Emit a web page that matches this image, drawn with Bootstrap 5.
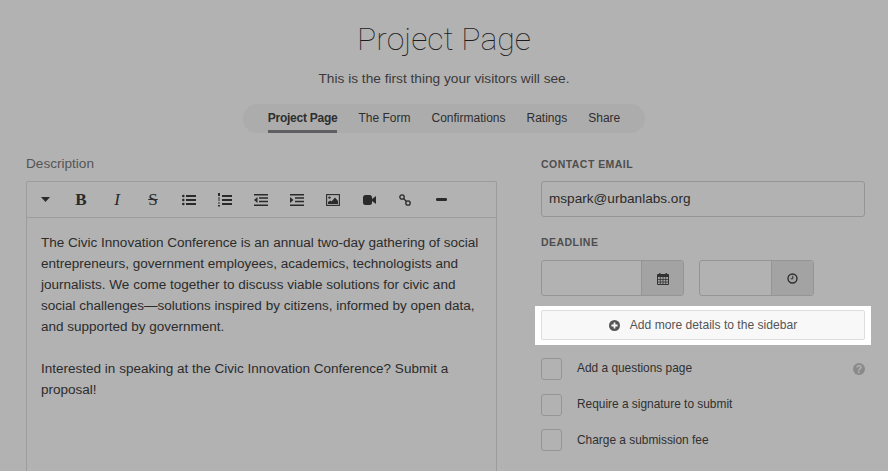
<!DOCTYPE html>
<html lang="en"><head><meta charset="utf-8">
<link href="https://cdn.jsdelivr.net/npm/bootstrap@5.3.0/dist/css/bootstrap.min.css" rel="stylesheet">
<script src="https://cdn.jsdelivr.net/npm/bootstrap@5.3.0/dist/js/bootstrap.bundle.min.js"></script>
<style>
html,body{height:471px;overflow:hidden}
body{background:#b2b2b2;font-family:"Liberation Sans",Arial,sans-serif;color:#2e2e2e;font-size:14px}
.hero-title{font-family:Roboto,"Liberation Sans",sans-serif;font-weight:100;font-size:32px;line-height:40px;color:#1c1c1c;padding-top:19px;margin:0}
.hero-sub{font-size:13.7px;line-height:20px;color:#3a3a3a;margin:10px 0 0}
.tabbar{margin-top:15px;height:29px;border-radius:15px;background:#acacac;padding:0 25px;gap:21px;font-size:12px}
.tab-item{line-height:29px;height:29px;color:#2e2e2e}
.tab-on{font-weight:700;letter-spacing:-.25px;border-bottom:3px solid #5f5f63}
.main-row{display:flex;padding:0 23px 0 26px;gap:44px;margin-top:21px}
.col-left{width:471px;flex:none}
.col-right{width:324px;flex:none;padding-top:3px}
.desc-label{font-size:13.6px;line-height:20px;color:#555;margin-bottom:7px}
.editor{border:1px solid #9c9c9c;border-radius:2px;border-bottom:0;height:300px}
.toolbar{height:36px;border-bottom:1px solid #9c9c9c}
.tbtn{width:36px;display:flex;justify-content:center;align-items:center;color:#2a2a2a;font-family:"Liberation Serif",serif;font-size:16px;line-height:16px}
.tb-b{font-size:17px}
.ed-text{padding:14px 14px;font-size:13.53px;line-height:21px;color:#2c2c2c}
.ed-text p{margin:0 0 21px}
.flabel{font-size:10.5px;font-weight:700;letter-spacing:.46px;color:#4e4e4e;line-height:14px;margin:0 0 10px}
.flabel-b{margin-bottom:11px}
.email-box{height:36px;border:1px solid #959595;border-radius:3px;padding:0 7px;line-height:34px;font-size:13.6px;color:#2a2a2a;margin-bottom:18px}
.date-row{display:flex;gap:15px}
.dt{display:flex;height:36px;border:1px solid #959595;border-radius:3px;overflow:hidden}
.dt-a{width:143px}.dt-b{width:115px}
.dt-in{flex:1}
.dt-addon{width:42px;background:#a3a3a3;border-left:1px solid #959595;display:flex;align-items:center;justify-content:center}
.spot{background:#fff;margin:10px -6px 0;padding:4px 6px 5px}
.addmore{height:30px;border:1px solid #dedede;border-radius:2px;background:#f8f8f8;display:flex;align-items:center;justify-content:center;gap:10px;font-size:12.1px;color:#555}
.chk-row{display:flex;align-items:center;height:22px;margin-bottom:13.5px;font-size:11.9px;color:#303030}
.chk{width:21px;height:22px;border:1px solid #959595;border-radius:3px;margin-right:15px;flex:none}
.chk-list{padding-top:13px}
.chk-txt{padding-top:1px}
.help-ic{margin-left:auto}
.tb-svg{fill:#2a2a2a}
</style></head><body>
<div class="text-center d-flex flex-column align-items-center">
<h1 class="hero-title">Project Page</h1>
<p class="hero-sub">This is the first thing your visitors will see.</p>
<div class="tabbar d-flex">
<span class="tab-item tab-on">Project Page</span><span class="tab-item">The Form</span><span class="tab-item">Confirmations</span><span class="tab-item">Ratings</span><span class="tab-item">Share</span>
</div></div>
<div class="main-row">
<div class="col-left">
<div class="desc-label">Description</div>
<div class="editor">
<div class="toolbar d-flex align-items-center">
<span class="tbtn"><svg width="9" height="5" viewBox="0 0 9 5"><path d="M0 0h9L4.5 5z" class="tb-svg"/></svg></span>
<span class="tbtn tb-b"><b>B</b></span>
<span class="tbtn tb-b"><i>I</i></span>
<span class="tbtn tb-b"><s>S</s></span>
<span class="tbtn"><svg width="14" height="12" viewBox="0 0 14 12" class="tb-svg"><circle cx="1.3" cy="2" r="1.3"/><circle cx="1.3" cy="6" r="1.3"/><circle cx="1.3" cy="10" r="1.3"/><path d="M4 1h10v2H4zM4 5h10v2H4zM4 9h10v2H4z"/></svg></span>
<span class="tbtn"><svg width="14" height="14" viewBox="0 0 14 14" class="tb-svg"><path d="M0 0h2v3H0zM0 4.5h2v1H0zM0 6.5h2v1H0zM0 9.5h2v1H0zM0 12h2v1.5H0zM4 2h10v2H4zM4 6h10v2H4zM4 10h10v2H4z"/></svg></span>
<span class="tbtn"><svg width="14" height="12" viewBox="0 0 14 12" class="tb-svg"><path d="M0 0h14v1.6H0zM5 3.3h9v1.5H5zM5 6.8h9v1.5H5zM0 10.4h14V12H0zM3.5 3v6L0 6z"/></svg></span>
<span class="tbtn"><svg width="14" height="12" viewBox="0 0 14 12" class="tb-svg"><path d="M0 0h14v1.6H0zM5 3.3h9v1.5H5zM5 6.8h9v1.5H5zM0 10.4h14V12H0zM0 3v6l3.5-3z"/></svg></span>
<span class="tbtn"><svg width="14" height="12" viewBox="0 0 14 12"><rect x=".6" y=".6" width="12.8" height="10.8" fill="none" stroke="#2a2a2a" stroke-width="1.1"/><circle cx="3.5" cy="3.6" r="1.2" class="tb-svg"/><path d="M2 10V8l2.3-1.6L5.5 7.5 9 3.5l3 3.5V10z" class="tb-svg"/></svg></span>
<span class="tbtn"><svg width="13" height="10" viewBox="0 0 13 10" class="tb-svg"><rect width="9" height="10" rx="2.5"/><path d="M9 4l4-3v8L9 6z"/></svg></span>
<span class="tbtn"><svg width="12" height="12" viewBox="0 0 12 12" fill="none" stroke="#2a2a2a" stroke-width="1.3"><circle cx="3" cy="3" r="2.2"/><circle cx="9" cy="9" r="2.2"/><path d="M4.8 4.8l2.4 2.4"/></svg></span>
<span class="tbtn"><svg width="11" height="3" viewBox="0 0 11 3" class="tb-svg"><rect width="11" height="3" rx="1.2"/></svg></span>
</div>
<div class="ed-text"><p>The Civic Innovation Conference is an annual two-day gathering of social entrepreneurs, government employees, academics, technologists and journalists. We come together to discuss viable solutions for civic and social challenges—solutions inspired by citizens, informed by open data, and supported by government.</p><p>Interested in speaking at the Civic Innovation Conference? Submit a proposal!</p></div>
</div></div>
<div class="col-right">
<div class="flabel">CONTACT EMAIL</div>
<div class="email-box">mspark@urbanlabs.org</div>
<div class="flabel flabel-b">DEADLINE</div>
<div class="date-row"><div class="dt dt-a"><div class="dt-in"></div><div class="dt-addon"><svg width="12" height="13" viewBox="0 0 12 13"><path d="M.5 2.5h11v10H.5z" fill="none" stroke="#333"/><path d="M.5 2.5h11v2.6H.5z" fill="#333"/><path d="M2.8 1v2.5M9.2 1v2.5" stroke="#333" stroke-width="1.4"/><path d="M.5 7.5h11M.5 10h11M3.3 5v7M6 5v7M8.7 5v7" stroke="#333" stroke-width=".8"/></svg></div></div><div class="dt dt-b"><div class="dt-in"></div><div class="dt-addon"><svg width="11" height="11" viewBox="0 0 11 11" fill="none" stroke="#2f2f2f"><circle cx="5.5" cy="5.5" r="4.5" stroke-width="1.4"/><path d="M5.8 2.8v3H3.6" stroke-width="1"/></svg></div></div></div>
<div class="spot"><div class="addmore"><svg width="11" height="11" viewBox="0 0 10 10"><circle cx="5" cy="5" r="5" fill="#555"/><path d="M5 2.2v5.6M2.2 5h5.6" stroke="#f8f8f8" stroke-width="1.6"/></svg><span>Add more details to the sidebar</span></div></div>
<div class="chk-list">
<div class="chk-row"><span class="chk"></span><span>Add a questions page</span><svg class="help-ic" width="12" height="12" viewBox="0 0 12 12"><circle cx="6" cy="6" r="6" fill="#8a8a8a"/><text x="6" y="9.8" text-anchor="middle" font-family="Liberation Sans" font-weight="700" font-size="10.5" fill="#b2b2b2">?</text></svg></div>
<div class="chk-row"><span class="chk"></span><span class="chk-txt">Require a signature to submit</span></div>
<div class="chk-row"><span class="chk"></span><span class="chk-txt">Charge a submission fee</span></div>
</div>
</div></div>
</body></html>
